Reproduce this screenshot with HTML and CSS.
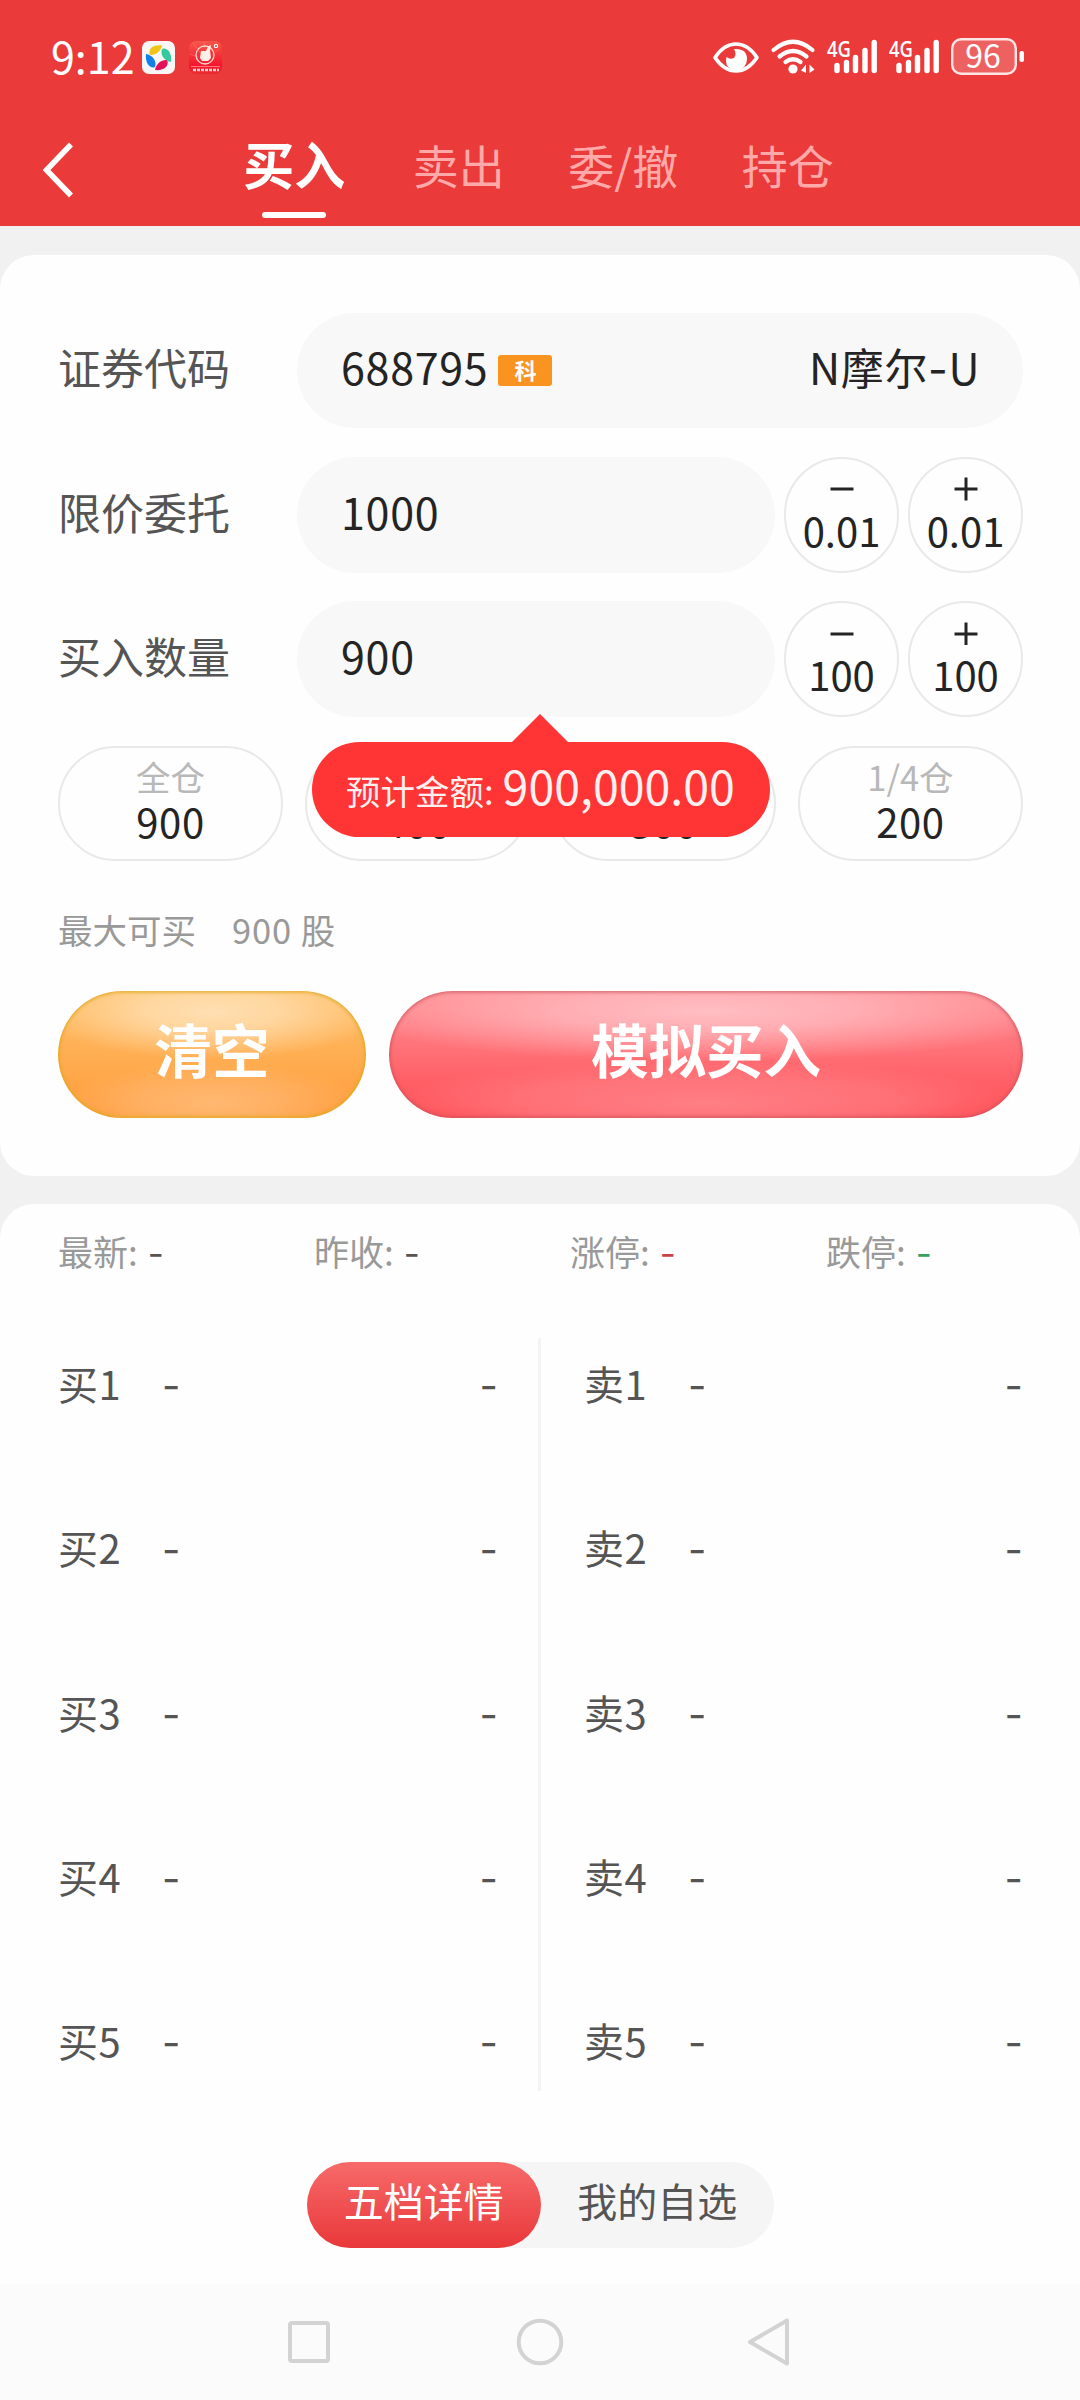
FILE: index.html
```html
<!DOCTYPE html>
<html lang="zh-CN">
<head>
<meta charset="utf-8">
<title>模拟买入</title>
<link rel="stylesheet" href="styles.css">
</head>
<body>
<header class="header">
  <div class="status">
    <div class="status-left">
      <span class="clock">9:12</span>
      <svg class="app-icon" width="33" height="33" viewBox="0 0 33 33">
        <rect width="33" height="33" rx="7" fill="#f8f7f5"/>
        <path d="M7.500 13C6.500 7 12 3.500 20 4.500C19 10 14 14 9 14Q7.800 14 7.500 13Z" fill="#efc416"/>
        <path d="M21 7.500C26 7 30 12 29 21C23 20 19 15 19.500 10Q19.800 8 21 7.500Z" fill="#35c9a0"/>
        <path d="M25.500 20C27 25 22 30 13 29C14 23 19 19 24 19Q25.300 19 25.500 20Z" fill="#e5105c"/>
        <path d="M4 13C10 14 14 19 13.500 24Q13.300 26 12 26.500C7 27 3 21 4 13Z" fill="#1180ea"/>
      </svg>
      <svg class="app-icon second" width="33" height="33" viewBox="0 0 33 33">
        <defs><linearGradient id="appRed" x1="0" y1="0" x2="0" y2="1"><stop offset="0" stop-color="#f9574a"/><stop offset=".75" stop-color="#f5152c"/><stop offset="1" stop-color="#ea2c30"/></linearGradient></defs>
        <rect width="33" height="33" rx="7" fill="url(#appRed)"/>
        <path d="M4 2L12 12M15 1L16 8M30 8L23 14M1 13L9 16" stroke="#ff8a74" stroke-width=".8" opacity=".6"/>
        <circle cx="16" cy="14" r="9" fill="none" stroke="#ffd9d0" stroke-width="1.300"/>
        <path d="M12 10H17L19 5.500L22 4L21 9.500L22 17L19 20H13L11 17Z" fill="#fff0e7"/>
        <rect x="25.500" y="3.500" width="3" height="3" rx="1" fill="none" stroke="#fff" stroke-width="1.200"/>
        <path d="M2 25.500H31" stroke="#ff8f8f" stroke-width=".8"/>
        <path d="M4 29H30" stroke="#ffd0d0" stroke-width="2.500" stroke-dasharray="3 1"/>
      </svg>
    </div>
    <svg class="status-icons" width="314" height="40" viewBox="711 36 314 40">
      <path d="M715 57.500Q724 44 736 44T757 57.500Q748 71 736 71T715 57.500Z" fill="none" stroke="#fff" stroke-width="3.600" stroke-linejoin="round"/>
      <path d="M734 49Q747 48 747 59Q747 69 736 70Q726 69 726 61Q726 59 726.500 57Q730 60 734 58Q737 54 734 49Z" fill="#fff"/>
      <g fill="none" stroke="#fff" stroke-width="4.200" stroke-linecap="round">
        <path d="M773.500 50Q793 33.500 812.500 50"/>
        <path d="M779.500 56.500Q793 45.500 806.500 56.500"/>
        <path d="M785.500 62Q793 56.500 800.500 62"/>
      </g>
      <circle cx="793" cy="69" r="4.600" fill="#fff"/>
      <path d="M801 70.500L806 64.500V73M809.500 64.500L814.500 69.500L809.500 73Z" fill="#fff"/>
      <text class="net" x="827" y="56.500" textLength="24" lengthAdjust="spacingAndGlyphs">4G</text>
      <g stroke="#fff" stroke-width="5.400" stroke-linecap="round"><path d="M837 65.500V70.500M846.500 62.500V70.500M855.500 57.500V70.500M865 50.500V70.500M874.200 42.500V70.500"/></g>
      <text class="net" x="889" y="56.500" textLength="24" lengthAdjust="spacingAndGlyphs">4G</text>
      <g stroke="#fff" stroke-width="5.400" stroke-linecap="round"><path d="M899 65.500V70.500M908.500 62.500V70.500M917.500 57.500V70.500M927 50.500V70.500M936.200 42.500V70.500"/></g>
      <rect x="952.200" y="39.200" width="63.600" height="34.600" rx="9" fill="#fff" fill-opacity=".2" stroke="#fde5e5" stroke-width="2.400"/>
      <rect x="1019.500" y="51" width="4.500" height="11" rx="2" fill="#fff"/>
      <text class="charge" x="983" y="67.500" text-anchor="middle">96</text>
    </svg>
  </div>
  <nav class="tabs">
    <div class="back">
      <svg width="34" height="56" viewBox="0 0 34 56"><path d="M29 2.500L4.500 28L29 53.500" fill="none" stroke="#fff" stroke-width="5.500"/></svg>
    </div>
    <div class="tab active">买入</div>
    <div class="tab">卖出</div>
    <div class="tab">委/撤</div>
    <div class="tab">持仓</div>
  </nav>
</header>

<main>
  <section class="card order">
    <div class="row">
      <label class="label">证券代码</label>
      <div class="field">
        <span class="num">688795</span><span class="badge">科</span>
        <span class="stock">N摩尔<span class="hy">-</span>U</span>
      </div>
    </div>
    <div class="row">
      <label class="label">限价委托</label>
      <div class="field"><span class="num">1000</span></div>
      <div class="step"><svg width="24" height="24"><path d="M.5 12H23.500"/></svg><span>0.01</span></div>
      <div class="step"><svg width="24" height="24"><path d="M.5 12H23.500M12 .5V23.500"/></svg><span>0.01</span></div>
    </div>
    <div class="row">
      <label class="label">买入数量</label>
      <div class="field"><span class="num">900</span></div>
      <div class="step"><svg width="24" height="24"><path d="M.5 13H23.500"/></svg><span>100</span></div>
      <div class="step"><svg width="24" height="24"><path d="M.5 13H23.500M12 1.500V24"/></svg><span>100</span></div>
    </div>
    <div class="quick">
      <div class="part"><span class="part-name">全仓</span><span class="part-num">900</span></div>
      <div class="part"><span class="part-name">1/2仓</span><span class="part-num">400</span></div>
      <div class="part"><span class="part-name">1/3仓</span><span class="part-num">300</span></div>
      <div class="part"><span class="part-name">1/4仓</span><span class="part-num">200</span></div>
      <div class="tip"><span>预计金额:</span><span class="tip-num">900,000.00</span></div>
    </div>
    <div class="limit"><span>最大可买</span><span class="limit-num">900 股</span></div>
    <div class="actions">
      <div class="btn clear">清空</div>
      <div class="btn buy">模拟买入</div>
    </div>
  </section>

  <section class="card market">
    <div class="quotes">
      <div>最新:<span class="hy">-</span></div>
      <div>昨收:<span class="hy">-</span></div>
      <div>涨停:<span class="hy up">-</span></div>
      <div>跌停:<span class="hy down">-</span></div>
    </div>
    <div class="book">
      <div class="side">
        <div class="level"><span>买1</span><span class="hy">-</span><span class="hy qty">-</span></div>
        <div class="level"><span>买2</span><span class="hy">-</span><span class="hy qty">-</span></div>
        <div class="level"><span>买3</span><span class="hy">-</span><span class="hy qty">-</span></div>
        <div class="level"><span>买4</span><span class="hy">-</span><span class="hy qty">-</span></div>
        <div class="level"><span>买5</span><span class="hy">-</span><span class="hy qty">-</span></div>
      </div>
      <div class="divider"></div>
      <div class="side sell">
        <div class="level"><span>卖1</span><span class="hy">-</span><span class="hy qty">-</span></div>
        <div class="level"><span>卖2</span><span class="hy">-</span><span class="hy qty">-</span></div>
        <div class="level"><span>卖3</span><span class="hy">-</span><span class="hy qty">-</span></div>
        <div class="level"><span>卖4</span><span class="hy">-</span><span class="hy qty">-</span></div>
        <div class="level"><span>卖5</span><span class="hy">-</span><span class="hy qty">-</span></div>
      </div>
    </div>
    <div class="toggle">
      <div class="option on">五档详情</div>
      <div class="option">我的自选</div>
    </div>
  </section>
</main>

<footer class="sysnav">
  <svg width="46" height="50" viewBox="0 0 46 50"><rect x="4" y="6" width="38" height="38" rx="2"/></svg>
  <svg width="50" height="50" viewBox="0 0 50 50"><circle cx="25" cy="25" r="21.300"/></svg>
  <svg width="46" height="50" viewBox="0 0 46 50"><path d="M39 3.500V46.500L2 25Z"/></svg>
</footer>
</body>
</html>
```
FILE: styles.css
```css
* { box-sizing: border-box; }

body {
  margin: 0;
  width: 1080px;
  height: 2400px;
  display: flex;
  flex-direction: column;
  background: #f1f1f1;
  color: #242424;
  font-family: "Noto Sans CJK SC", sans-serif;
  overflow: hidden;
}

svg { display: block; flex: none; overflow: visible; }

/* header */
.header { height: 226px; background: #ea3a3a; color: #fff; }
.status {
  height: 114px;
  padding: 36px 55px 38px 51px;
  display: flex;
  justify-content: space-between;
}
.status-left { display: flex; align-items: center; }
.clock { width: 83px; font-size: 43px; line-height: 40px; padding-bottom: 2px; white-space: nowrap; }
.app-icon { margin: 3px 0 0 8px; }
.app-icon.second { margin-left: 14px; }
.net { font: 600 22px "Open Sans", sans-serif; fill: #fff; }
.charge { font: 400 32px "Noto Sans CJK SC", sans-serif; fill: #fff; }

.tabs { display: flex; height: 112px; }
.back { width: 212px; padding: 28px 0 0 42px; }
.tab {
  width: 164.500px;
  display: flex;
  flex-direction: column;
  align-items: center;
  padding-top: 1px;
  font-size: 46px;
  line-height: 98px;
  color: #ffa9a9;
}
.tab.active { font-size: 51px; line-height: 97px; font-weight: 700; color: #fff; }
.tab.active::after { content: ""; width: 64px; height: 6px; border-radius: 3px; background: #fff; }

/* cards */
main { flex: 1; }
.card { background: #fefefe; }
.order { height: 921px; margin-top: 29px; padding: 58px 57px 0 58px; border-radius: 34px; }

.row { height: 116px; margin-bottom: 28px; display: flex; }
.row:first-child { height: 115px; margin-bottom: 29px; }
.label { width: 239px; padding-bottom: 9px; align-self: center; font-size: 43px; line-height: 60px; color: #555; }
.field {
  flex: 1;
  display: flex;
  align-items: center;
  padding: 0 43px 9px 44px;
  border-radius: 58px;
  background: #f8f8f8;
  font-size: 43px;
  line-height: 60px;
}
.num { letter-spacing: .7px; }
.badge {
  width: 54px;
  height: 31px;
  margin: 9px 0 0 10px;
  border-radius: 3px;
  background: #fa9420;
  color: #fff;
  font-size: 22px;
  font-weight: 700;
  line-height: 29px;
  text-align: center;
}
.stock { margin-left: auto; letter-spacing: .6px; }
.hy { font-family: Inter, sans-serif; line-height: 1; }

.step {
  width: 115px;
  margin-left: 9px;
  padding-top: 18px;
  display: flex;
  flex-direction: column;
  align-items: center;
  gap: 7px;
  border: 2px solid #e9e9e9;
  border-radius: 58px;
  font-size: 40px;
  line-height: 44px;
}
.step svg { fill: none; stroke: #242424; stroke-width: 3; }

.quick { position: relative; height: 115px; margin-top: 29px; display: flex; justify-content: space-between; }
.part {
  width: 225px;
  padding-top: 6px;
  display: flex;
  flex-direction: column;
  align-items: center;
  border: 2px solid #e9e9e9;
  border-radius: 58px;
}
.part-name { font-size: 34.5px; line-height: 44px; color: #b8b8b8; }
.part-num { font-size: 40px; line-height: 47px; letter-spacing: .6px; }

.tip {
  position: absolute;
  left: 254px;
  top: -4px;
  width: 458px;
  height: 95px;
  display: flex;
  align-items: baseline;
  gap: 9px;
  padding-left: 34px;
  border-radius: 48px;
  background: #ff3535;
  color: #fff0f0;
  font-size: 34.5px;
  line-height: 50px;
  white-space: nowrap;
}
.tip::before {
  content: "";
  position: absolute;
  left: 200px;
  top: -28px;
  border: 28px solid transparent;
  border-top: 0;
  border-bottom-color: #ff3535;
}
.tip-num { font-size: 46.500px; line-height: 86px; }

.limit { margin-top: 46px; display: flex; gap: 36px; font-size: 34.5px; line-height: 44px; color: #999; }
.limit-num { letter-spacing: .9px; }

.actions { margin-top: 40px; display: flex; gap: 23px; }
.btn {
  height: 127px;
  border-radius: 64px;
  color: #fff;
  font-size: 57.500px;
  font-weight: 700;
  line-height: 115px;
  text-align: center;
}
.clear {
  width: 308px;
  background:
    radial-gradient(ellipse 175px 48px at 50% 16%, #ffdfb2 0%, #ffdfb2c0 40%, #ffdfb200 100%),
    radial-gradient(ellipse 150px 40px at 50% 88%, #ffb872 0%, #ffb872a0 50%, #ffb87200 100%),
    linear-gradient(#ffc16a, #ffae52 50%, #ff9b3b);
  box-shadow: inset 0 0 3px 2px #dfa81fb0;
}
.buy {
  flex: 1;
  background:
    radial-gradient(ellipse 370px 50px at 50% 16%, #ffbec3 0%, #ffbec3b8 40%, #ffbec300 100%),
    radial-gradient(ellipse 320px 42px at 50% 88%, #ff7f84 0%, #ff7f84a0 60%, #ff7f8400 100%),
    linear-gradient(#ff8f94, #ff6b71 55%, #ff4c54);
  box-shadow: inset 0 0 3px 2px #c8505c90;
}

/* market panel */
.market { height: 1080px; margin-top: 28px; padding: 25px 57px 0 58px; border-radius: 34px 34px 0 0; }
.quotes { height: 44px; display: flex; font-size: 35px; line-height: 44px; color: #999; }
.quotes div { width: 256px; flex: none; white-space: nowrap; }
.quotes .hy { margin-left: 10px; color: #555; }
.quotes .up { color: #c9444a; }
.quotes .down { color: #35a05f; }

.book { height: 753px; margin-top: 65px; display: flex; }
.side { width: 440px; display: flex; flex-direction: column; justify-content: space-between; }
.divider { width: 3px; margin-left: 40px; background: #f4f4f4; }
.side.sell { width: 439px; margin-left: auto; }
.level {
  height: 96px;
  display: flex;
  align-items: baseline;
  font-size: 40px;
  line-height: 90px;
  color: #555;
}
.level span:first-child { width: 104px; letter-spacing: .6px; }
.level .qty { margin-left: auto; }

.toggle { width: 467px; height: 86px; margin: 71px auto 0 249px; display: flex; border-radius: 43px; background: #f5f5f5; }
.option { width: 234px; padding-bottom: 9px; border-radius: 43px; font-size: 40px; line-height: 77px; text-align: center; color: #555; }
.on { background: linear-gradient(#f76a6a, #e9383a); color: #fff; }

/* system navigation */
.sysnav {
  height: 116px;
  padding: 0 286px;
  display: flex;
  align-items: center;
  justify-content: space-between;
  background: #fbfbfb;
}
.sysnav svg { fill: none; stroke: #d3d3d3; stroke-width: 4; stroke-linejoin: round; }
```
